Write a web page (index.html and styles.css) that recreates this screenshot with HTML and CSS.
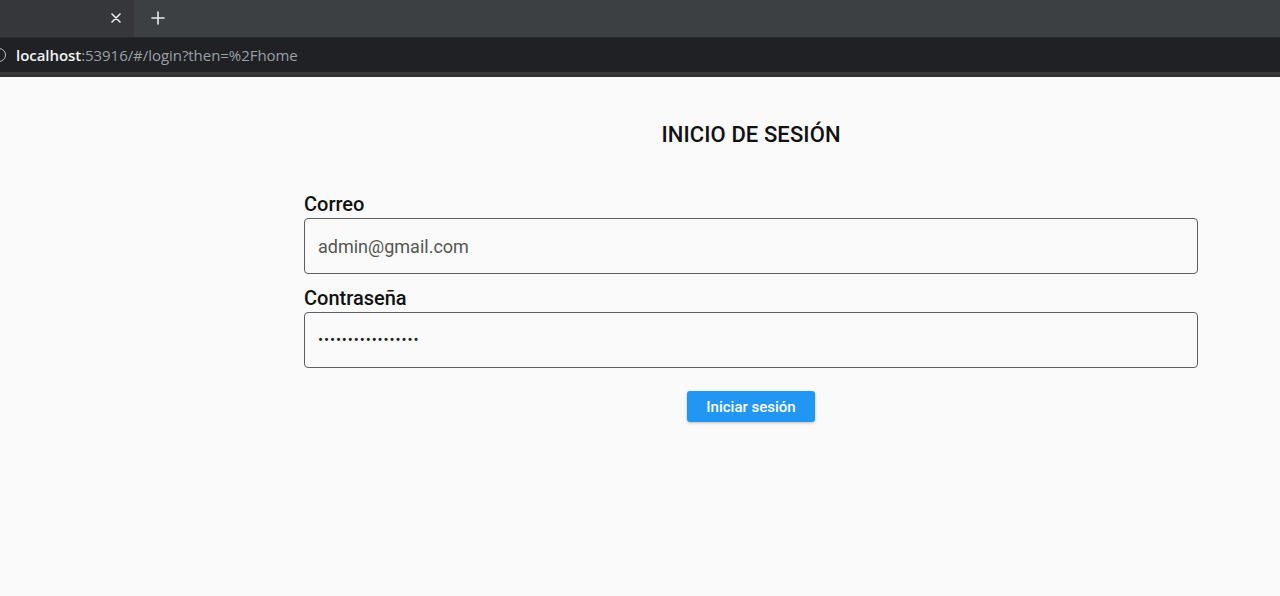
FILE: index.html
```html
<!DOCTYPE html>
<html lang="es">
<head>
<meta charset="utf-8">
<title>Inicio de sesión</title>
<link rel="stylesheet" href="styles.css">
</head>
<body>
<div class="chrome">
  <div class="tabstrip">
    <div class="tab">
      <span class="tab-close">
        <svg width="10" height="10" viewBox="0 0 10 10"><path d="M1 1 L9 9 M9 1 L1 9" stroke="#e8eaed" stroke-width="1.6" stroke-linecap="round"/></svg>
      </span>
    </div>
    <div class="newtab">
      <svg width="14" height="14" viewBox="0 0 14 14"><path d="M7 1 V13 M1 7 H13" stroke="#e8eaed" stroke-width="1.6" stroke-linecap="round"/></svg>
    </div>
  </div>
  <div class="toolbar">
    <span class="site-icon"></span>
    <span class="url"><span class="host">localhost</span><span class="rest">:53916/#/login?then=%2Fhome</span></span>
  </div>
  <div class="toolbar-edge"></div>
</div>
<main class="page">
  <div class="form">
    <h1 class="title">INICIO DE SESIÓN</h1>
    <label class="label">Correo</label>
    <div class="field"><span class="value">admin@gmail.com</span></div>
    <label class="label">Contraseña</label>
    <div class="field"><span class="dots">•••••••••••••••••</span></div>
    <div class="actions"><button class="btn">Iniciar sesión</button></div>
  </div>
</main>
</body>
</html>
```
FILE: styles.css
```css
html, body {
  margin: 0;
  padding: 0;
  background: #fafafa;
  height: 100%;
  overflow: hidden;
}
.chrome {
  height: 77px;
  display: flex;
  flex-direction: column;
}
.tabstrip {
  height: 37px;
  background: #3d4043;
  display: flex;
  align-items: center;
}
.tab {
  width: 134px;
  height: 37px;
  background: #35373a;
  display: flex;
  align-items: center;
  justify-content: flex-end;
}
.tab-close {
  width: 20px;
  height: 20px;
  display: flex;
  align-items: center;
  justify-content: center;
  margin-right: 8px;
  margin-top: -2px;
}
.newtab {
  margin-left: 17px;
  margin-top: -2px;
  display: flex;
}
.toolbar {
  height: 34px;
  background: #202124;
  display: flex;
  align-items: center;
  border-top: 1px solid #2a2b2e;
}
.site-icon {
  width: 12px;
  height: 12px;
  border: 1.5px solid #bdc1c6;
  border-radius: 50%;
  margin-left: -8px;
  margin-right: 10px;
  flex: none;
}
.url {
  font-family: "Open Sans", "Noto Sans", sans-serif;
  font-size: 15px;
  letter-spacing: -0.05px;
}
.host { color: #f1f3f4; font-weight: 600; }
.rest { color: #9aa0a6; }
.toolbar-edge {
  height: 5px;
  background: linear-gradient(#3a3b3e, #2c2d30);
}
.page {
  font-family: Roboto, "Noto Sans", sans-serif;
}
.form {
  margin-left: 304px;
  width: 894px;
  display: flex;
  flex-direction: column;
}
.title {
  margin: 45px 0 0;
  font-size: 22px;
  font-weight: 500;
  line-height: 26px;
  text-align: center;
  color: #111;
  letter-spacing: 0.1px;
}
.label {
  margin-top: 44px;
  font-size: 20px;
  font-weight: 500;
  line-height: 24px;
  color: #111;
  display: block;
}
.label + .field { margin-top: 2px; }
.field + .label { margin-top: 12px; }
.field {
  height: 54px;
  border: 1px solid #5f5f5f;
  border-radius: 4px;
  display: flex;
  align-items: center;
  padding-left: 13px;
}
.value {
  font-size: 18px;
  color: #555;
}
.dots {
  font-size: 15px;
  letter-spacing: 0.9px;
  color: #222;
}
.actions {
  display: flex;
  justify-content: center;
  margin-top: 23px;
}
.btn {
  width: 128px;
  height: 31px;
  border: none;
  border-radius: 3px;
  background: #2196f3;
  color: #fff;
  font-family: Roboto, "Noto Sans", sans-serif;
  font-size: 15px;
  font-weight: 500;
  box-shadow: 0 1px 3px rgba(0,0,0,0.25);
  padding: 0;
}
```
